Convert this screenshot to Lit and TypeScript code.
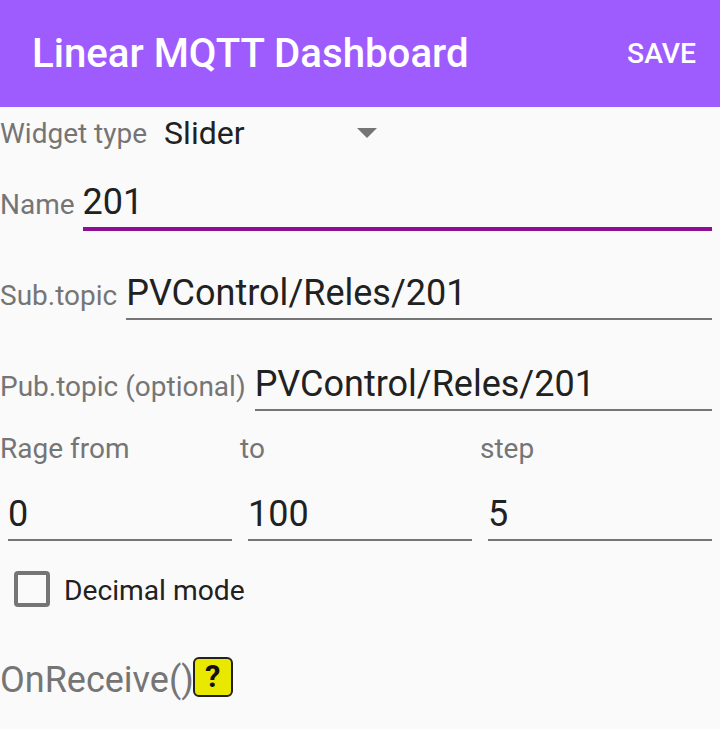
import { LitElement, html, css } from 'lit';
import { customElement } from 'lit/decorators.js';

@customElement('app-root')
export class AppRoot extends LitElement {
  static styles = css`
    :host {
      display: block;
      height: 729px;
      overflow: hidden;
      background: #fafafa;
      font-family: Roboto, sans-serif;
      color: #212121;
    }

    .toolbar {
      height: 107px;
      background: #9e5cff;
      color: #fff;
      display: flex;
      align-items: center;
      justify-content: space-between;
      padding: 0 24px 0 32px;
      box-sizing: border-box;
    }

    .title {
      font-size: 40.2px;
      font-weight: 500;
    }

    .save {
      font-size: 28.3px;
      font-weight: 500;
    }

    .label {
      font-size: 28px;
      line-height: 33px;
      color: #757575;
      white-space: nowrap;
    }

    .row {
      display: flex;
      align-items: baseline;
      gap: 8px;
      padding-right: 8px;
    }

    .type-row {
      height: 52px;
      align-items: center;
      gap: 17px;
    }

    .spinner {
      width: 213px;
      display: flex;
      align-items: center;
      justify-content: space-between;
      font-size: 32px;
    }

    .caret {
      width: 0;
      height: 0;
      border-left: 10px solid transparent;
      border-right: 10px solid transparent;
      border-top: 10px solid #757575;
    }

    .field {
      flex: 1;
      font-size: 36px;
      line-height: 44px;
      border-bottom: 2px solid #757575;
      padding-bottom: 3px;
      min-width: 0;
    }

    .name {
      margin-top: 21px;
    }

    .name .field {
      border-bottom: 4px solid #8e0e96;
    }

    .sub {
      margin-top: 40px;
      gap: 9px;
    }

    .pub {
      margin-top: 42px;
      gap: 9px;
    }

    .range-labels {
      display: grid;
      grid-template-columns: 240px 240px 1fr;
      margin-top: 21px;
    }

    .range {
      display: grid;
      grid-template-columns: repeat(3, 224px);
      gap: 16px;
      padding-left: 8px;
      margin-top: 27px;
    }

    .decimal {
      display: flex;
      align-items: center;
      gap: 14px;
      padding-left: 14px;
      margin-top: 30px;
      font-size: 28.2px;
    }

    .decimal span:last-child {
      padding-top: 2px;
    }

    .box {
      width: 36px;
      height: 36px;
      border: 4px solid #757575;
      border-radius: 4px;
      box-sizing: border-box;
    }

    .receive {
      display: flex;
      align-items: flex-start;
      margin-top: 50px;
      font-size: 36px;
      line-height: 40px;
      color: #757575;
    }

    .receive span:first-child {
      margin-top: 3px;
    }

    .help {
      width: 40px;
      height: 40px;
      margin-left: -1px;
      box-sizing: border-box;
      background: #e8e800;
      border: 2px solid #212121;
      border-radius: 6px;
      color: #111;
      font-size: 31px;
      font-weight: 700;
      display: flex;
      align-items: center;
      justify-content: center;
    }
  `;

  render() {
    return html`
      <div class="toolbar">
        <span class="title">Linear MQTT Dashboard</span>
        <span class="save">SAVE</span>
      </div>
      <div class="row type-row">
        <span class="label">Widget type</span>
        <div class="spinner"><span>Slider</span><span class="caret"></span></div>
      </div>
      <div class="row name">
        <span class="label">Name</span>
        <div class="field">201</div>
      </div>
      <div class="row sub">
        <span class="label">Sub.topic</span>
        <div class="field">PVControl/Reles/201</div>
      </div>
      <div class="row pub">
        <span class="label">Pub.topic (optional)</span>
        <div class="field">PVControl/Reles/201</div>
      </div>
      <div class="range-labels label">
        <span>Rage from</span><span>to</span><span>step</span>
      </div>
      <div class="range">
        <div class="field">0</div>
        <div class="field">100</div>
        <div class="field">5</div>
      </div>
      <div class="decimal"><span class="box"></span><span>Decimal mode</span></div>
      <div class="receive"><span>OnReceive()</span><span class="help">?</span></div>
    `;
  }
}
